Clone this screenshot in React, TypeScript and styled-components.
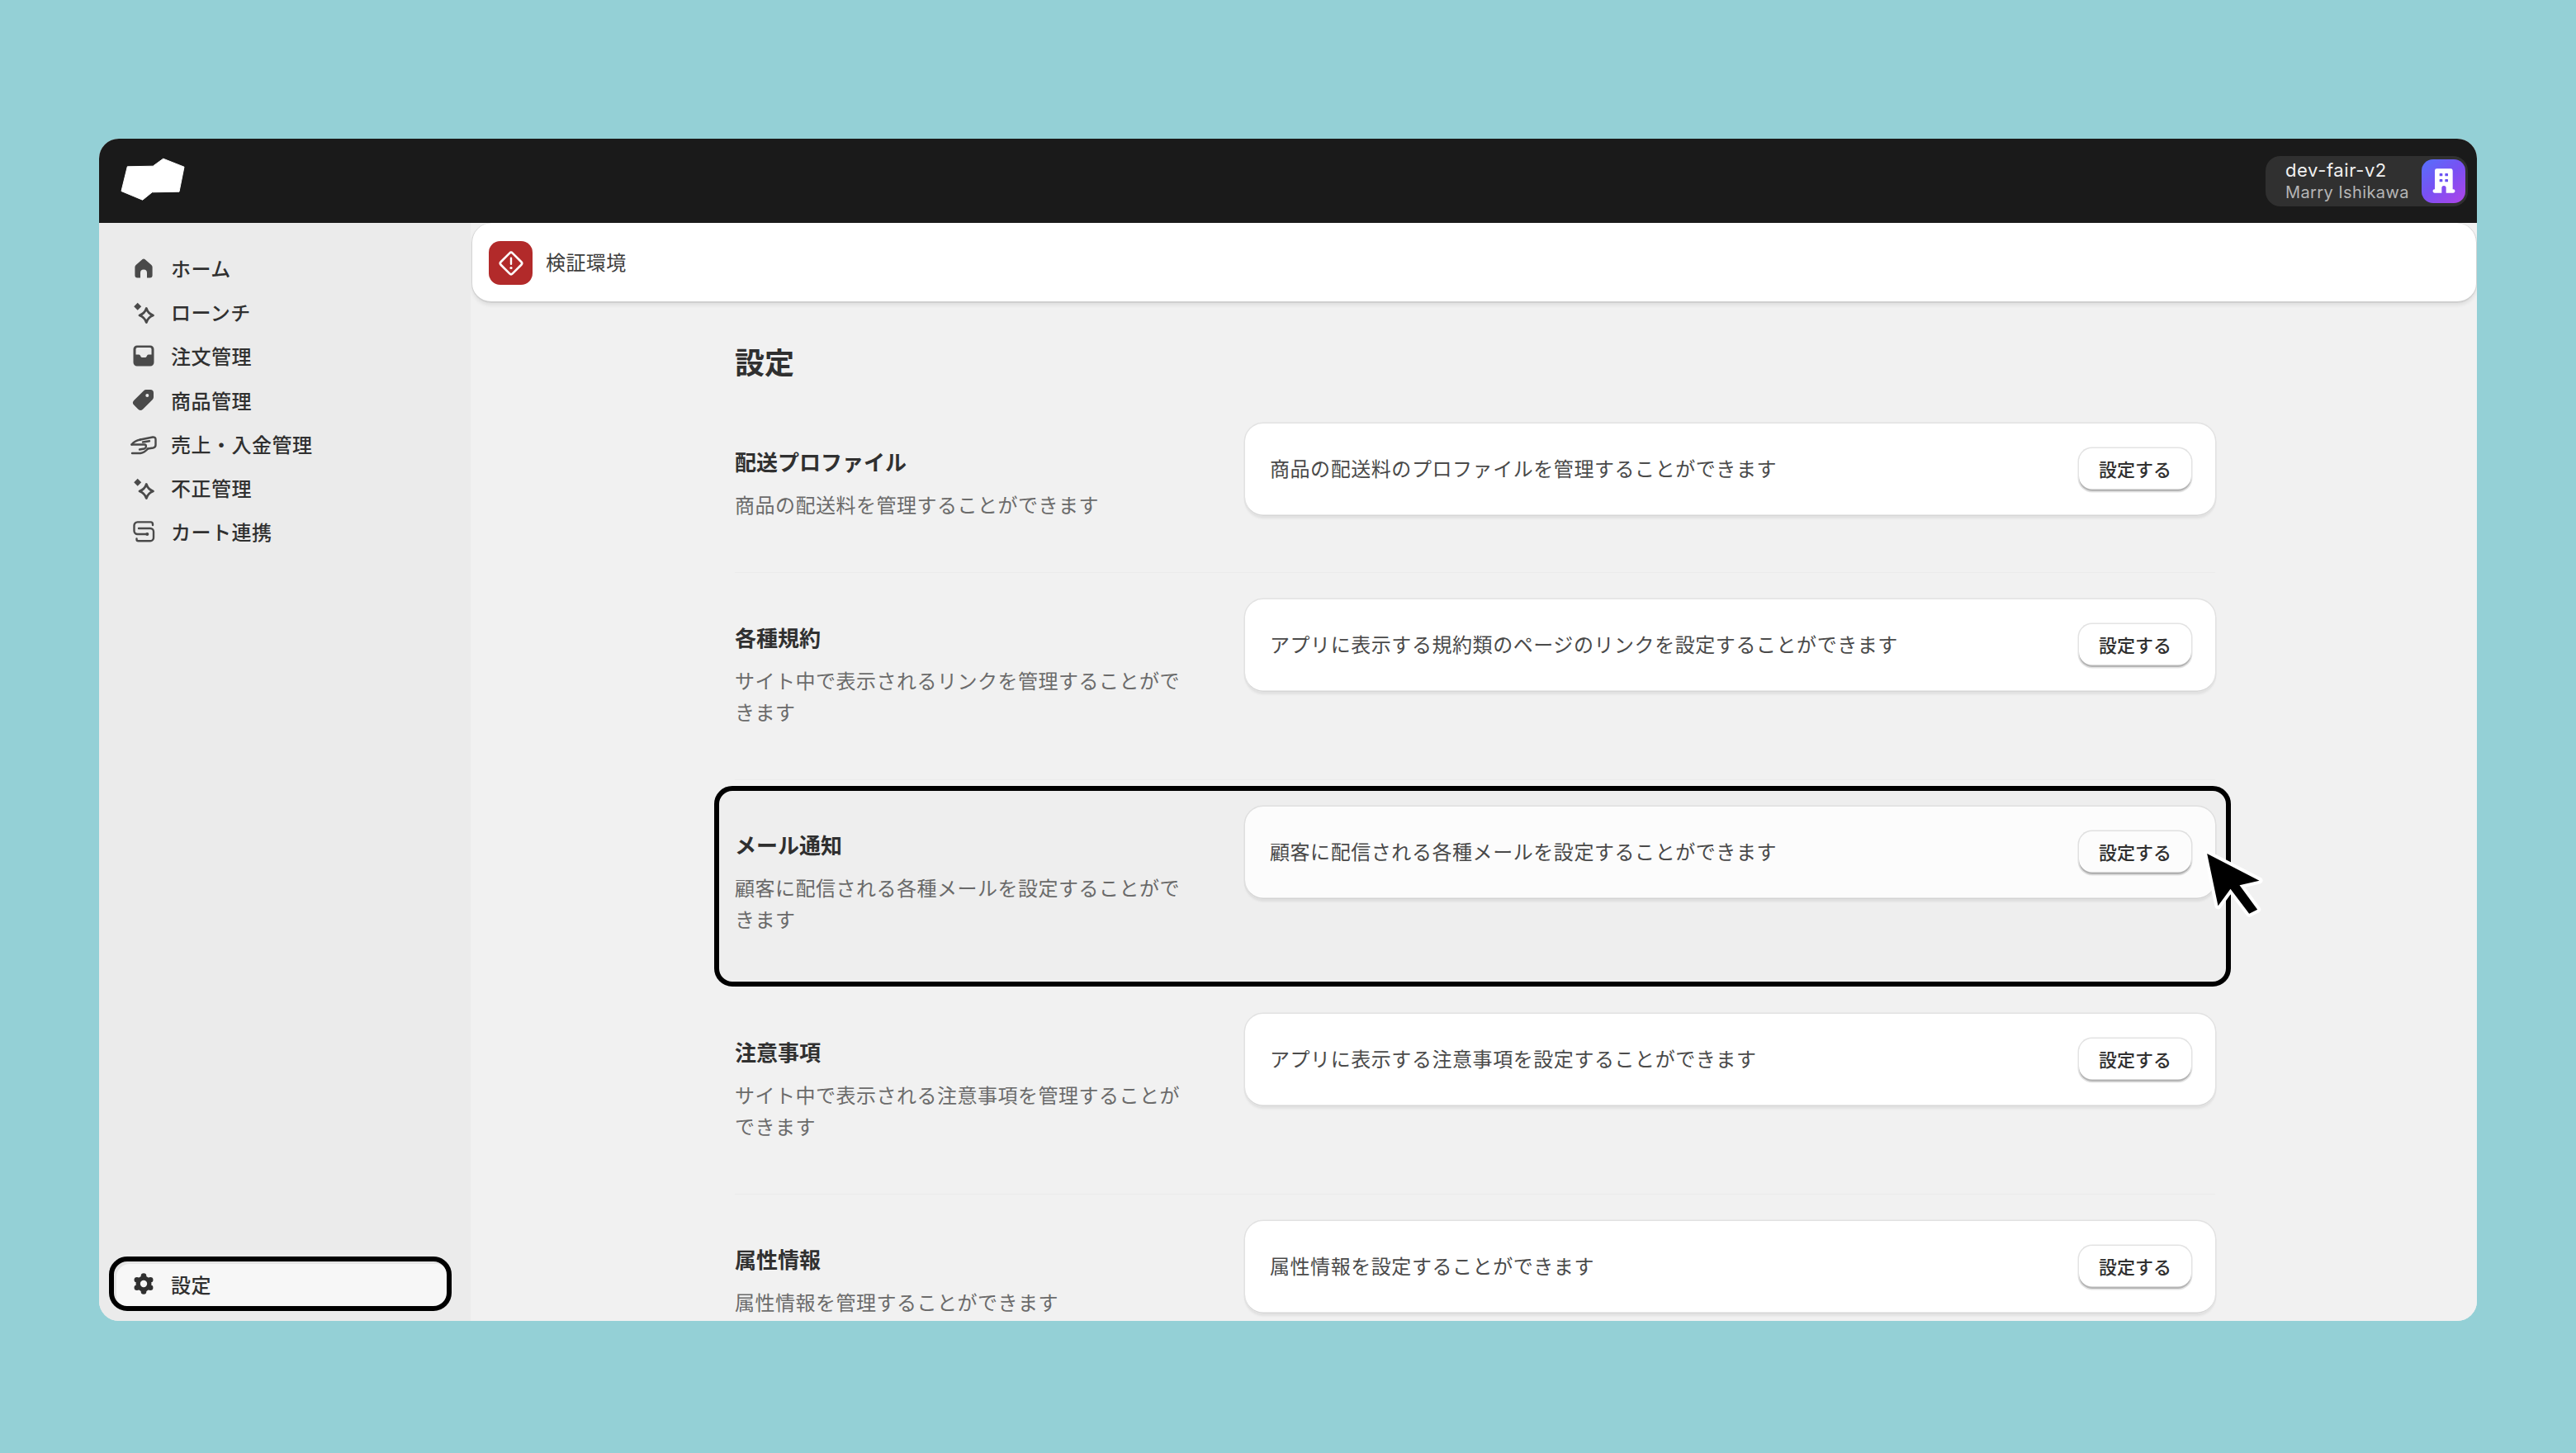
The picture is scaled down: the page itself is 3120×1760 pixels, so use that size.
import React from 'react'
import styled, { createGlobalStyle } from 'styled-components'

const GlobalStyle = createGlobalStyle`
  html, body {
    margin: 0;
    padding: 0;
    background: #94d0d6;
  }
  * {
    box-sizing: border-box;
  }
  body {
    font-family: Inter, "Noto Sans CJK JP", sans-serif;
    color: #303030;
  }
`

const Page = styled.div`
  width: 3120px;
  height: 1760px;
  padding: 168px 120px 160px;
  background: #94d0d6;
`

const Window = styled.div`
  height: 1432px;
  display: flex;
  flex-direction: column;
  border-radius: 24px;
  overflow: hidden;
  background: #f1f1f1;
`

const TopBar = styled.header`
  height: 102px;
  flex: none;
  display: flex;
  align-items: center;
  justify-content: space-between;
  padding: 0 11px 0 24px;
  background: #1a1a1a;
`

const Logo = styled.svg`
  width: 84px;
  height: 58px;
  display: block;
`

const Account = styled.div`
  width: 245px;
  height: 61px;
  display: flex;
  align-items: center;
  justify-content: space-between;
  padding: 0 3px 0 24px;
  border-radius: 18px;
  background: #303030;
`

const AccountText = styled.div`
  display: flex;
  flex-direction: column;
  padding-top: 1px;
`

const ShopName = styled.span`
  font-size: 22px;
  line-height: 27px;
  letter-spacing: 0.6px;
  color: #f1f1f1;
`

const UserName = styled.span`
  font-size: 20px;
  line-height: 27px;
  letter-spacing: 0.4px;
  color: #b5b5b5;
`

const Avatar = styled.div`
  width: 53px;
  height: 53px;
  display: flex;
  align-items: center;
  justify-content: center;
  border-radius: 14px;
  background: linear-gradient(140deg, #5570fb 0%, #7a50f3 50%, #b044e8 100%);
`

const Body = styled.div`
  flex: 1;
  min-height: 0;
  display: flex;
`

const Sidebar = styled.nav`
  width: 450px;
  flex: none;
  display: flex;
  flex-direction: column;
  padding: 28px 12px 12px;
  background: #ebebeb;
`

const NavItem = styled.div`
  height: 53.2px;
  display: flex;
  align-items: center;
  gap: 17px;
  padding-left: 26px;
  font-size: 24px;
  font-weight: 500;
  letter-spacing: 0.5px;
  color: #303030;
`

const SettingsItem = styled(NavItem)`
  height: 66px;
  margin-top: auto;
  margin-right: 11px;
  padding-left: 20px;
  border: 6px solid #000;
  border-radius: 22px;
  background: #f7f7f7;
  box-shadow: inset 3px 3px 0 #e6e6e6;
`

const NavIcon = styled.svg`
  width: 32px;
  height: 32px;
  flex: none;
  display: block;
  color: #4a4a4a;
`

const Main = styled.main`
  flex: 1;
  min-width: 0;
  overflow: hidden;
  background: #f1f1f1;
`

const Banner = styled.div`
  height: 97px;
  margin-left: 1px;
  display: flex;
  align-items: center;
  gap: 16px;
  padding: 0 21px;
  border-radius: 24px;
  background: #fff;
  font-size: 24px;
  letter-spacing: 0.4px;
  color: #3d3d3d;
  box-shadow: inset 1px 0 0 #d4d4d4, inset -1px 0 0 #d4d4d4, inset 0 -2px 0 #cfcfcf, 0 3px 4px rgba(0, 0, 0, 0.07);
`

const BannerIcon = styled.div`
  width: 53px;
  height: 53px;
  flex: none;
  display: flex;
  align-items: center;
  justify-content: center;
  border-radius: 14px;
  background: #b22a2a;
`

const BannerLabel = styled.span`
  padding-bottom: 4px;
`

const Content = styled.div`
  padding: 49px 317px 0 320px;
`

const Title = styled.h1`
  margin: 0 0 17px;
  font-size: 36px;
  line-height: 48px;
  font-weight: 700;
  color: #303030;
`

const Row = styled.section`
  position: relative;
  display: grid;
  grid-template-columns: 556px 1175px;
  column-gap: 62px;
  align-items: start;
  padding: 32px 0;
  border-bottom: 1px solid #ebebeb;

  &:last-child {
    border-bottom: none;
  }
`

const RowText = styled.div`
  padding: 28px 0 29px;
`

const RowTitle = styled.h2`
  margin: 0 0 13px;
  font-size: 26px;
  line-height: 40px;
  font-weight: 700;
  color: #303030;
`

const RowDesc = styled.p`
  margin: 0;
  font-size: 24px;
  line-height: 38px;
  letter-spacing: 0.5px;
  color: #6b6b6b;
`

const Card = styled.div`
  height: 112px;
  display: flex;
  align-items: center;
  justify-content: space-between;
  padding: 0 29px 0 30px;
  border-radius: 22px;
  background: #fff;
  font-size: 24px;
  letter-spacing: 0.56px;
  color: #4a4a4a;
  box-shadow: 0 0 0 1.5px #e2e2e2, inset 0 -1.5px 0 #d6d6d6, 0 3px 3px rgba(0, 0, 0, 0.07);
`

const CardText = styled.span`
  padding-bottom: 5px;
`

const SetButton = styled.button`
  width: 136px;
  height: 52px;
  flex: none;
  padding: 0 0 5px;
  border: none;
  border-radius: 16px;
  background: #fff;
  font-family: inherit;
  font-size: 22px;
  font-weight: 500;
  color: #303030;
  box-shadow: 0 0 0 1.5px #e3e3e3, inset 0 -2.5px 0 #b5b5b5;
`

const Highlight = styled.div`
  position: absolute;
  top: 7px;
  bottom: 0;
  left: -25px;
  right: -19px;
  border: 6px solid #000;
  border-radius: 22px;
  background: rgba(0, 0, 0, 0.01);
  pointer-events: none;
`

const Cursor = styled.svg`
  position: absolute;
  left: 1779px;
  top: 84px;
  width: 77px;
  height: 84px;
`

const NAV_COLOR = 'currentColor'

const HomeIcon = () => (
  <NavIcon viewBox="0 0 32 32">
    <path
      fill={NAV_COLOR}
      d="M14.6 5a2.2 2.2 0 0 1 2.8 0l8 6.9a3.4 3.4 0 0 1 1.2 2.6v10a3 3 0 0 1-3 3H20v-6a4 4 0 0 0-8 0v6H8.400a3 3 0 0 1-3-3v-10a3.400 3.400 0 0 1 1.200-2.600z"
    />
  </NavIcon>
)

const SparkleIcon = () => (
  <NavIcon viewBox="0 0 32 32">
    <path fill={NAV_COLOR} d="M8.700 4.800l4.500 4.500-4.500 4.500-4.500-4.500z" />
    <path
      fill="none"
      stroke={NAV_COLOR}
      strokeWidth="2.800"
      strokeLinejoin="round"
      d="M19.300 11.500C20.500 15.500 23.500 18.500 27.500 20C23.500 21.500 20.500 24.500 19.300 28.500C18 24.500 15 21.500 11 20C15 18.500 18 15.500 19.300 11.500Z"
    />
  </NavIcon>
)

const InboxIcon = () => (
  <NavIcon viewBox="0 0 32 32">
    <path
      fill={NAV_COLOR}
      fillRule="evenodd"
      d="M8 3.500H24A4.500 4.500 0 0 1 28.500 8V24A4.500 4.500 0 0 1 24 28.500H8A4.500 4.500 0 0 1 3.500 24V8A4.500 4.500 0 0 1 8 3.500ZM8.500 6H23.500a2 2 0 0 1 2 2V14.500H22a2 2 0 0 0-1.800 1.100l-.6 1.200a2 2 0 0 1-1.800 1.200h-3.600a2 2 0 0 1-1.800-1.200l-.6-1.200A2 2 0 0 0 10 14.500H6.500V8a2 2 0 0 1 2-2Z"
    />
  </NavIcon>
)

const TagIcon = () => (
  <NavIcon viewBox="0 0 32 32">
    <path
      fill={NAV_COLOR}
      fillRule="evenodd"
      d="M19 4h5a4 4 0 0 1 4 4v5a4 4 0 0 1-1.200 2.900L15 27.700a4 4 0 0 1-5.600 0l-5.200-5.200a4 4 0 0 1 0-5.600L16.100 5.200A4 4 0 0 1 19 4ZM20.300 9a2 2 0 1 0 0 4a2 2 0 0 0 0-4Z"
    />
  </NavIcon>
)

const HandIcon = () => (
  <NavIcon viewBox="0 0 32 32">
    <g fill="none" stroke={NAV_COLOR} strokeWidth="2.400" strokeLinecap="round" strokeLinejoin="round">
      <path d="M12 11.500L27 8.500C29 8.200 30.500 9.500 30.500 11V18C30.500 20 29.500 21 27.500 21.500L21 22.500" />
      <path d="M1.500 17.500C4 14 7 12.500 12 11.500" />
      <path d="M1.500 17.500H17C19.500 17.500 19.500 21.500 17 22.500L11 23.500" />
      <path d="M15 14.500L23 13.300" />
      <path d="M21 22.500C19 25 15 27.500 12 28H2" />
    </g>
  </NavIcon>
)

const LinkIcon = () => (
  <NavIcon viewBox="0 0 32 32">
    <g fill="none" stroke={NAV_COLOR} strokeWidth="2.400" strokeLinecap="round" strokeLinejoin="round">
      <path d="M27 8V7a2.600 2.600 0 0 0-2.600-2.600H8.500a4 4 0 0 0-4 4V15a4 4 0 0 0 4 4H20" />
      <path d="M10 12H24a4 4 0 0 1 4 4V23a4 4 0 0 1-4 4.300H9.500a2 2 0 0 1-2-2V24.500" />
    </g>
    <circle cx="20.300" cy="19" r="2" fill={NAV_COLOR} />
  </NavIcon>
)

const GearIcon = () => (
  <NavIcon viewBox="0 0 32 32" style={{ color: '#303030' }}>
    <g fill={NAV_COLOR}>
      <circle cx="16" cy="16" r="9.500" />
      {[0, 60, 120, 180, 240, 300].map(angle => (
        <circle
          key={angle}
          cx={16 + 9.4 * Math.sin((angle * Math.PI) / 180)}
          cy={16 - 9.4 * Math.cos((angle * Math.PI) / 180)}
          r="3.300"
        />
      ))}
    </g>
    <circle cx="16" cy="16" r="4.200" fill="#f7f7f7" />
  </NavIcon>
)

const navItems = [
  { label: 'ホーム', icon: <HomeIcon /> },
  { label: 'ローンチ', icon: <SparkleIcon /> },
  { label: '注文管理', icon: <InboxIcon /> },
  { label: '商品管理', icon: <TagIcon /> },
  { label: '売上・入金管理', icon: <HandIcon /> },
  { label: '不正管理', icon: <SparkleIcon /> },
  { label: 'カート連携', icon: <LinkIcon /> }
]

const settings = [
  {
    title: '配送プロファイル',
    desc: '商品の配送料を管理することができます',
    card: '商品の配送料のプロファイルを管理することができます'
  },
  {
    title: '各種規約',
    desc: 'サイト中で表示されるリンクを管理することができます',
    card: 'アプリに表示する規約類のページのリンクを設定することができます'
  },
  {
    title: 'メール通知',
    desc: '顧客に配信される各種メールを設定することができます',
    card: '顧客に配信される各種メールを設定することができます',
    active: true
  },
  {
    title: '注意事項',
    desc: 'サイト中で表示される注意事項を管理することができます',
    card: 'アプリに表示する注意事項を設定することができます'
  },
  {
    title: '属性情報',
    desc: '属性情報を管理することができます',
    card: '属性情報を設定することができます'
  }
]

export default function App() {
  return (
    <Page>
      <GlobalStyle />
      <Window>
        <TopBar>
          <Logo viewBox="0 0 84 58">
            <path
              fill="#fff"
              stroke="#fff"
              strokeWidth="1"
              strokeLinejoin="round"
              d="M7.300 10.300L38.300 9.700L50.700 0.700L76 10.700L70 40.700L37.300 41.300L25.700 50.700L0 40Z"
              transform="translate(3 1.500)"
            />
          </Logo>
          <Account>
            <AccountText>
              <ShopName>dev-fair-v2</ShopName>
              <UserName>Marry Ishikawa</UserName>
            </AccountText>
            <Avatar>
              <svg width="32" height="36" viewBox="730 120 96 108">
                <path
                  fill="#fff"
                  d="M752 130H803a7 7 0 0 1 7 7V205H812a6.500 6.500 0 0 1 0 13H786V200a8 8 0 0 0-16 0V218H744a6.500 6.500 0 0 1 0-13H745V137a7 7 0 0 1 7-7Z"
                />
                <g fill="#6b52f2">
                  <rect x="762" y="147" width="11" height="10" rx="2" />
                  <rect x="782" y="147" width="11" height="10" rx="2" />
                  <rect x="762" y="168" width="11" height="10" rx="2" />
                  <rect x="782" y="168" width="11" height="10" rx="2" />
                </g>
              </svg>
            </Avatar>
          </Account>
        </TopBar>
        <Body>
          <Sidebar>
            {navItems.map(item => (
              <NavItem key={item.label}>
                {item.icon}
                {item.label}
              </NavItem>
            ))}
            <SettingsItem>
              <GearIcon />
              設定
            </SettingsItem>
          </Sidebar>
          <Main>
            <Banner>
              <BannerIcon>
                <svg width="32" height="32" viewBox="0 0 32 32">
                  <rect
                    x="6"
                    y="6"
                    width="20"
                    height="20"
                    rx="2.500"
                    fill="none"
                    stroke="#fff"
                    strokeWidth="2.600"
                    transform="rotate(45 16 16)"
                  />
                  <rect x="14.800" y="8.500" width="2.400" height="9.500" rx="1.200" fill="#fff" />
                  <circle cx="16" cy="21.500" r="1.600" fill="#fff" />
                </svg>
              </BannerIcon>
              <BannerLabel>検証環境</BannerLabel>
            </Banner>
            <Content>
              <Title>設定</Title>
              {settings.map(item => (
                <Row key={item.title}>
                  <RowText>
                    <RowTitle>{item.title}</RowTitle>
                    <RowDesc>{item.desc}</RowDesc>
                  </RowText>
                  <Card>
                    <CardText>{item.card}</CardText>
                    <SetButton>設定する</SetButton>
                  </Card>
                  {item.active && (
                    <>
                      <Highlight />
                      <Cursor viewBox="660 270 230 252">
                        <path
                          d="M672 285L862 383L790 400L855 488L825 503L757 413L712 475Z"
                          fill="#000"
                          stroke="#fff"
                          strokeWidth="24"
                          strokeLinejoin="round"
                          paintOrder="stroke"
                        />
                      </Cursor>
                    </>
                  )}
                </Row>
              ))}
            </Content>
          </Main>
        </Body>
      </Window>
    </Page>
  )
}
